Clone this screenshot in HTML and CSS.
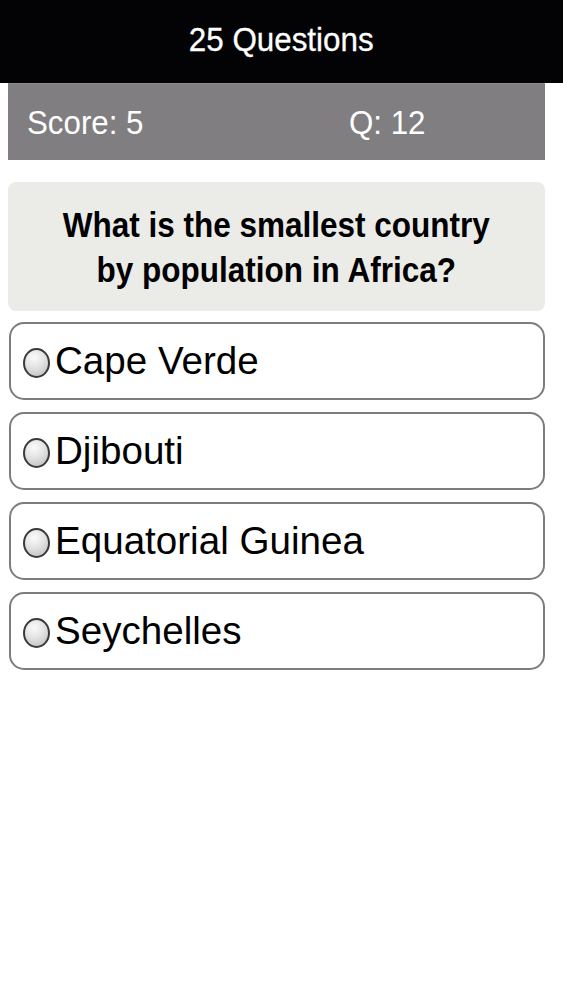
FILE: index.html
```html
<!DOCTYPE html>
<html lang="en">
<head>
<meta charset="utf-8">
<title>25 Questions</title>
<link rel="stylesheet" href="styles.css">
</head>
<body>
  <header class="topbar">
    <span class="topbar-title">25 Questions</span>
  </header>
  <main class="content">
    <div class="status">
      <span class="status-text">Score: 5</span>
      <span class="status-text">Q: 12</span>
    </div>
    <div class="question">
      <p class="question-text">What is the smallest country<br>by population in Africa?</p>
    </div>
    <ul class="options">
      <li class="option"><span class="radio"></span><span class="option-label">Cape Verde</span></li>
      <li class="option"><span class="radio"></span><span class="option-label">Djibouti</span></li>
      <li class="option"><span class="radio"></span><span class="option-label">Equatorial Guinea</span></li>
      <li class="option"><span class="radio"></span><span class="option-label">Seychelles</span></li>
    </ul>
  </main>
</body>
</html>
```

FILE: styles.css
```css
* { box-sizing: border-box; }

html, body {
  margin: 0;
  padding: 0;
  background: #ffffff;
  font-family: "Liberation Sans", Arial, sans-serif;
  color: #000;
}

.topbar {
  height: 83px;
  background: #030204;
  display: flex;
  align-items: center;
  justify-content: center;
  padding-bottom: 4px;
}

.topbar-title {
  display: inline-block;
  color: #ffffff;
  font-size: 33px;
  line-height: 1;
  transform: scaleX(0.95);
  -webkit-text-stroke: 0.3px #fff;
}

.content {
  width: 537px;
  margin-left: 8px;
}

.status {
  height: 77px;
  background: #807e80;
  border-top: 1px solid #8d8b8d;
  display: grid;
  grid-template-columns: 322px 1fr;
  align-items: center;
  padding-left: 19px;
}

.status-text {
  display: inline-block;
  color: #ffffff;
  font-size: 34px;
  line-height: 1;
  transform: scaleX(0.92);
  transform-origin: left center;
}

.question {
  margin-top: 22px;
  height: 129px;
  background: #ebebe7;
  border-radius: 8px;
  display: flex;
  align-items: center;
  justify-content: center;
}

.question-text {
  margin: 0;
  font-weight: bold;
  font-size: 35px;
  line-height: 45px;
  text-align: center;
  transform: scaleX(0.9);
  white-space: nowrap;
}

.options {
  list-style: none;
  margin: 11px 0 0 1px;
  padding: 0;
  display: flex;
  flex-direction: column;
  gap: 12px;
}

.option {
  height: 78px;
  border: 2px solid #7d7d7d;
  border-radius: 15px;
  display: flex;
  align-items: center;
  padding-left: 12px;
  gap: 5px;
}

.radio {
  flex: none;
  width: 27px;
  height: 30px;
  margin-top: 4px;
  border-radius: 50%;
  border: 2px solid #3a3a3a;
  background: radial-gradient(circle at 40% 30%, #fbfbfb 0%, #e2e2e2 45%, #b9b9b9 100%);
}

.option-label {
  font-size: 38.6px;
  line-height: 1;
}
```
